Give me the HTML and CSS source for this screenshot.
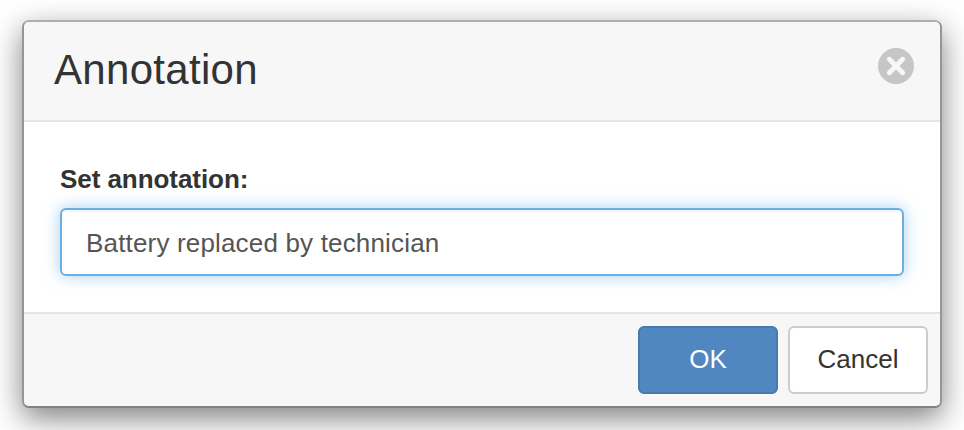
FILE: index.html
```html
<!DOCTYPE html>
<html lang="en">
<head>
<meta charset="utf-8">
<title>Annotation</title>
<link rel="stylesheet" href="styles.css">
</head>
<body>
<form class="dialog" role="dialog" aria-labelledby="title">
  <header class="header">
    <h1 class="title" id="title">Annotation</h1>
    <button class="close" type="button" aria-label="Close">
      <svg viewBox="0 0 36 36" width="36" height="36"><circle cx="18" cy="18" r="18" fill="#c6c6c6"/><path d="M11.3 11.3l13.4 13.4M24.7 11.3L11.3 24.7" stroke="#f7f7f7" stroke-width="4.8" stroke-linecap="round"/></svg>
    </button>
  </header>
  <main class="body">
    <label class="label" for="note">Set annotation:</label>
    <input class="input" id="note" type="text" value="Battery replaced by technician">
  </main>
  <footer class="footer">
    <button class="btn primary" type="button">OK</button>
    <button class="btn" type="button">Cancel</button>
  </footer>
</form>
</body>
</html>
```
FILE: styles.css
```css
* { box-sizing: border-box; }
body {
  margin: 0;
  height: 430px;
  padding: 20px 22px 22px;
  overflow: hidden;
  background: #fff;
  color: #333;
  font-family: "Liberation Sans", Arial, sans-serif;
}
.dialog {
  display: flex;
  flex-direction: column;
  width: 920px;
  height: 388px;
  border: 2px solid;
  border-color: #aeaeae #969696 #828282;
  border-radius: 7px;
  background: #fff;
  box-shadow: 0 10px 30px rgba(0, 0, 0, .5);
  overflow: hidden;
}
.header {
  display: flex;
  align-items: center;
  justify-content: space-between;
  height: 100px;
  padding: 0 26px 10px 30px;
  border-bottom: 2px solid #e5e5e5;
  background: #f7f7f7;
}
.title { margin: 0; padding-top: 7px; font-size: 42px; font-weight: 400; line-height: 50px; letter-spacing: .3px; }
.close { width: 36px; height: 36px; padding: 0; border: 0; background: none; }
.close svg { display: block; }
.body { height: 190px; padding: 42px 36px 0; }
.label { display: block; height: 44px; font-size: 26px; font-weight: 700; line-height: 30px; letter-spacing: -.06px; }
.input {
  display: block;
  width: 844px;
  height: 68px;
  padding: 2px 24px 0;
  border: 2px solid #6caee0;
  border-radius: 6px;
  outline: 0;
  color: #555;
  font: 26px "Liberation Sans", Arial, sans-serif;
  letter-spacing: .17px;
  box-shadow: inset 0 2px 2px rgba(0, 0, 0, .04), 0 0 16px rgba(102, 175, 233, .6);
}
.footer {
  display: flex;
  flex: 1;
  justify-content: flex-end;
  gap: 10px;
  padding: 12px;
  border-top: 2px solid #e5e5e5;
  background: #f7f7f7;
}
.btn {
  width: 140px;
  height: 68px;
  padding: 0 0 2px;
  border: 2px solid #ccc;
  border-radius: 6px;
  background: #fff;
  color: #333;
  font: 26px "Liberation Sans", Arial, sans-serif;
}
.primary { border-color: #457aae; background: #5087c0; color: #fff; }
```
